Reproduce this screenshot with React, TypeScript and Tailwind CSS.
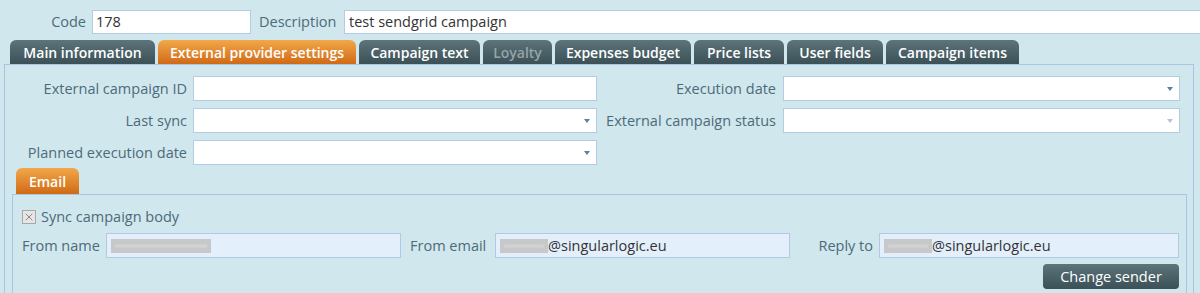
import { X } from 'lucide-react'

type Tab = { label: string; width: number; active?: boolean; disabled?: boolean }

const tabs: Tab[] = [
  { label: 'Main information', width: 145 },
  { label: 'External provider settings', width: 198, active: true },
  { label: 'Campaign text', width: 121 },
  { label: 'Loyalty', width: 69, disabled: true },
  { label: 'Expenses budget', width: 136 },
  { label: 'Price lists', width: 90 },
  { label: 'User fields', width: 96 },
  { label: 'Campaign items', width: 133 },
]

function Arrow({ faint }: { faint?: boolean }) {
  return (
    <span
      className={
        'absolute right-[6px] top-[10px] w-0 h-0 border-l-[3px] border-r-[3px] border-t-[4px] border-l-transparent border-r-transparent ' +
        (faint ? 'border-t-[#b5c5d5]' : 'border-t-[#5b7fa8]')
      }
    />
  )
}

function Field({ width, combo, faint }: { width: number; combo?: boolean; faint?: boolean }) {
  return (
    <div className="relative h-[25px] bg-white border border-[#b3cce4]" style={{ width }}>
      {combo && <Arrow faint={faint} />}
    </div>
  )
}

function Redacted({ width }: { width: number }) {
  return (
    <span className="inline-block h-[14px] bg-[#c6c8ca] relative" style={{ width }}>
      <span className="absolute left-[4px] right-[4px] top-[6px] h-[2px] bg-[#dcdcdc] blur-[1px]" />
    </span>
  )
}

export default function App() {
  return (
    <div className="w-[1200px] h-[293px] overflow-hidden bg-[#d1e7ee] text-[14.5px] text-[#4c6b78]" style={{ fontFamily: '"Open Sans", "DejaVu Sans", sans-serif' }}>
      {/* header fields */}
      <div className="flex items-center h-[24px] mt-[10px]">
        <span className="w-[86px] shrink-0 text-right">Code</span>
        <div className="ml-[6px] shrink-0 w-[159px] h-[24px] bg-white border border-[#b3cce4] flex items-center px-[3px] text-[#333]">178</div>
        <span className="ml-[8px] shrink-0 w-[80px] whitespace-nowrap">Description</span>
        <div className="ml-[5px] shrink-0 w-[870px] h-[24px] bg-white border border-[#b3cce4] flex items-center px-[4px] text-[#333]">test sendgrid campaign</div>
      </div>

      {/* tabs */}
      <div className="flex gap-[3px] pl-[10px] mt-[6px] h-[24px]">
        {tabs.map(t => (
          <div
            key={t.label}
            className={
              'h-[24px] rounded-t-[6px] flex items-center justify-center font-semibold text-[14px] whitespace-nowrap ' +
              (t.active
                ? 'bg-gradient-to-b from-[#f2a848] to-[#cf6a14] text-white'
                : 'bg-gradient-to-b from-[#5d747b] to-[#3b5057] ' + (t.disabled ? 'text-[#95a4a8]' : 'text-white'))
            }
            style={{ width: t.width }}
          >
            {t.label}
          </div>
        ))}
      </div>

      {/* main panel */}
      <div className="ml-[4px] w-[1190px] h-[240px] border border-[#a9c5e2] border-b-0 pt-[11px]">
        <div className="flex">
          <div className="flex flex-col gap-[7px]">
            <div className="flex items-center">
              <span className="w-[182px] text-right whitespace-nowrap">External campaign ID</span>
              <div className="ml-[6px]"><Field width={404} /></div>
            </div>
            <div className="flex items-center">
              <span className="w-[182px] text-right">Last sync</span>
              <div className="ml-[6px]"><Field width={404} combo /></div>
            </div>
            <div className="flex items-center">
              <span className="w-[182px] text-right whitespace-nowrap">Planned execution date</span>
              <div className="ml-[6px]"><Field width={404} combo /></div>
            </div>
          </div>
          <div className="flex flex-col gap-[7px]">
            <div className="flex items-center">
              <span className="w-[179px] text-right">Execution date</span>
              <div className="ml-[7px]"><Field width={397} combo /></div>
            </div>
            <div className="flex items-center">
              <span className="w-[179px] text-right whitespace-nowrap">External campaign status</span>
              <div className="ml-[7px]"><Field width={397} combo faint /></div>
            </div>
          </div>
        </div>

        {/* email tab */}
        <div className="ml-[11px] mt-[3px] w-[63px] h-[26px] rounded-t-[6px] bg-gradient-to-b from-[#f2a848] to-[#cf6a14] text-white font-semibold text-[14px] flex items-center justify-center">
          Email
        </div>
        <div className="ml-[7px] w-[1175px] h-[120px] border border-[#a9c5e2] border-b-0 pt-[13px] pl-[9px]">
          <div className="flex items-center gap-[5px] h-[18px]">
            <span className="w-[14px] h-[14px] bg-[#e6e6e6] border border-[#a8a8a8] flex items-center justify-center">
              <X size={12} strokeWidth={2} color="#8a8a8a" />
            </span>
            <span>Sync campaign body</span>
          </div>
          <div className="flex items-center mt-[7px]">
            <span className="w-[84px] whitespace-nowrap">From name</span>
            <div className="w-[295px] h-[25px] bg-[#e4effc] border border-[#b3c8e6] flex items-center px-[4px]">
              <Redacted width={100} />
            </div>
            <span className="ml-[9px] w-[85px] whitespace-nowrap">From email</span>
            <div className="w-[295px] h-[25px] bg-[#e4effc] border border-[#b3c8e6] flex items-center px-[4px] text-[#333]">
              <Redacted width={48} />@singularlogic.eu
            </div>
            <span className="w-[89px] pr-[6px] text-right whitespace-nowrap">Reply to</span>
            <div className="w-[300px] h-[25px] bg-[#e4effc] border border-[#b3c8e6] flex items-center px-[4px] text-[#333]">
              <Redacted width={48} />@singularlogic.eu
            </div>
          </div>
          <div className="flex justify-end pr-[7px] mt-[6px]">
            <button className="w-[136px] h-[25px] rounded-[4px] bg-gradient-to-b from-[#5d747b] to-[#3b5057] text-white text-[14.5px]">
              Change sender
            </button>
          </div>
        </div>
      </div>
    </div>
  )
}
